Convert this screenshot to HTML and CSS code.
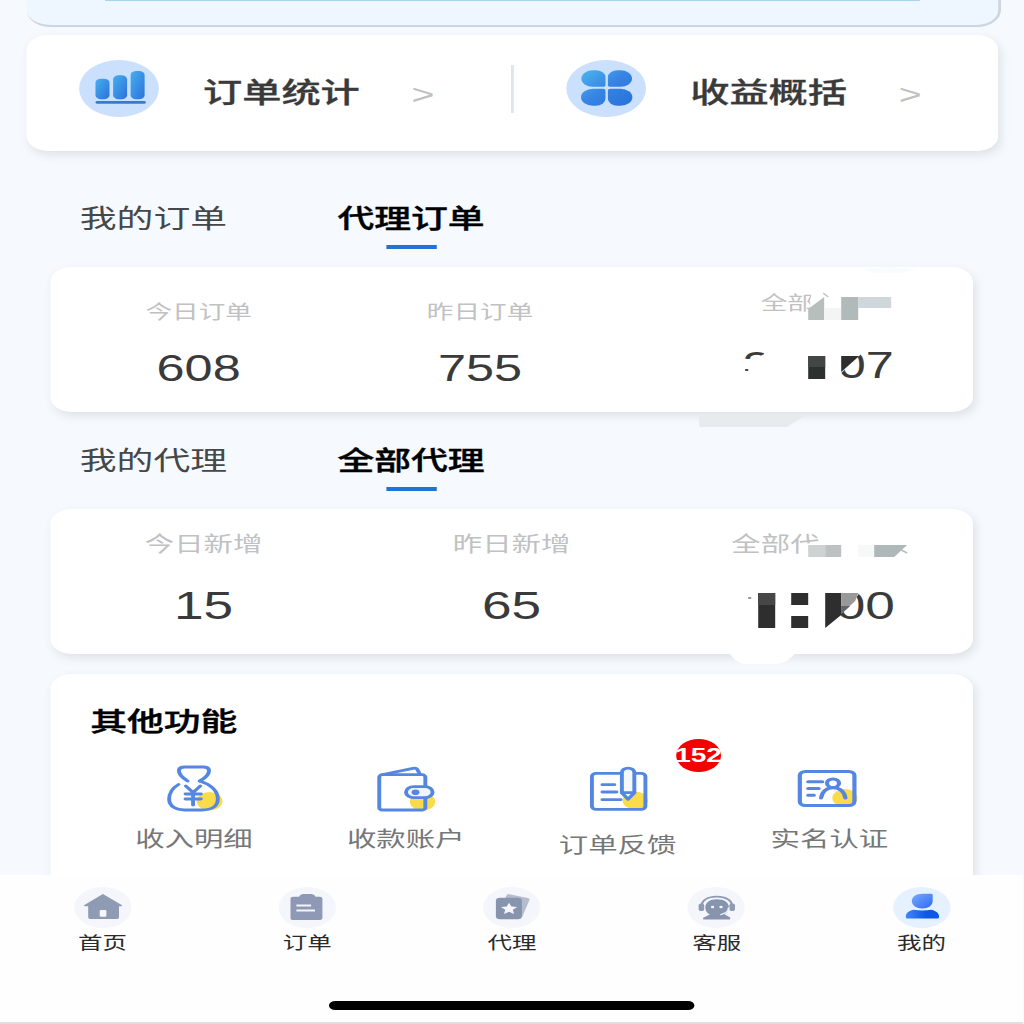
FILE: index.html
```html
<!DOCTYPE html>
<html lang="zh-CN">
<head>
  <meta charset="UTF-8">
  <meta name="viewport" content="width=device-width, initial-scale=1.0">
  <title>我的</title>

  <link rel="stylesheet" href="styles.css">
</head>
<body>
  <div class="screen">
    <div class="main">
      <div class="banner"><div class="bannerLine"></div></div>

      <!--shortcuts-->
      <div class="card links">
        <div class="link">
          <svg class="linkIcon" viewBox="0 0 58 57">
            <defs>
              <linearGradient id="blue" x1="0" y1="0" x2="1" y2="1">
                <stop offset="0" stop-color="#47aeee"/>
                <stop offset="1" stop-color="#2b72dc"/>
              </linearGradient>
              <linearGradient id="petals" gradientUnits="userSpaceOnUse" x1="12" y1="12" x2="44" y2="44">
                <stop offset="0" stop-color="#4ab2ee"/>
                <stop offset=".5" stop-color="#3784e3"/>
                <stop offset="1" stop-color="#2874dc"/>
              </linearGradient>
            </defs>
            <circle cx="29" cy="28.5" r="28.5" fill="#cbe0fc"/>
            <rect x="12.2" y="18.7" width="10" height="20.5" rx="4" fill="url(#blue)"/>
            <rect x="24.8" y="15.3" width="10" height="23.9" rx="4" fill="url(#blue)"/>
            <rect x="37.3" y="11" width="10" height="28.2" rx="4" fill="url(#blue)"/>
            <rect x="12.2" y="41" width="36" height="2.8" rx="1.4" fill="#3a79d2"/>
          </svg>
          <span class="linkText">订单统计</span>
          <span class="arrow">&gt;</span>
        </div>
        <div class="divider"></div>
        <div class="link">
          <svg class="linkIcon" viewBox="0 0 58 57">
            <circle cx="29" cy="28.500" r="28.500" fill="#cbe0fc"/>
            <g fill="url(#petals)">
              <path d="M19.500 10.300h2a7 7 0 0 1 7 7v7.500a2 2 0 0 1-2 2h-7a8.250 8.250 0 0 1 0-16.500z"/>
              <path d="M39.200 10.300h-2a7 7 0 0 0-7 7v7.500a2 2 0 0 0 2 2h7a8.250 8.250 0 0 0 0-16.500z"/>
              <path d="M19.500 45.800h2a7 7 0 0 0 7-7v-8a2 2 0 0 0-2-2h-7a8.500 8.500 0 0 0 0 17z"/>
              <path d="M39.200 45.800h-2a7 7 0 0 1-7-7v-8a2 2 0 0 1 2-2h7a8.500 8.500 0 0 1 0 17z"/>
            </g>
          </svg>
          <span class="linkText">收益概括</span>
          <span class="arrow">&gt;</span>
        </div>
      </div>

      <!--orders-->
      <div class="tabs">
        <span class="tab">我的订单</span>
        <span class="tab active">代理订单</span>
      </div>
      <div class="card stats orders">
        <div class="stat">
          <p class="label">今日订单</p>
          <p class="num">608</p>
        </div>
        <div class="stat">
          <p class="label">昨日订单</p>
          <p class="num">755</p>
        </div>
        <div class="stat total">
          <p class="label">全部</p>
          <p class="num"><span>2</span><span>07</span></p>
        </div>
        <svg class="mosaic" viewBox="690 260 240 175" preserveAspectRatio="none">
          <path d="M699 414h108l-20 13h-88z" fill="#e8ebee"/>
          <path d="M860 269q30-3 56 0l-12 4h-30z" fill="#f9fbfe"/>
          <!--label-->
          <path d="M812 289h16v8l-18 17v-14z" fill="#fff"/>
          <path d="M823 293l5 4" stroke="#bcc1c0" stroke-width="1.5"/>
          <path d="M808 309l16-12v23h-16z" fill="#b7bfbd"/>
          <path d="M824 308h17v12h-17z" fill="#f3f4f4"/>
          <path d="M841 297h17v23h-17z" fill="#afbab9"/>
          <path d="M858 297h33v11h-33z" fill="#cfd7da"/>
          <!--number-->
          <path d="M740 359h15l9-5v-7h16v37h-40z" fill="#fff"/>
          <path d="M745 369h3v2h-3z" fill="#444"/>
          <path d="M808 356h17v23h-17z" fill="#2e302f"/>
          <path d="M808 356h17v11h-17z" fill="#434645"/>
          <path d="M834 345h26v10l-20 19h-6z" fill="#fff"/>
          <path d="M841 356h18l-18 16z" fill="#2e302f"/>
        </svg>
      </div>

      <!--agents-->
      <div class="tabs">
        <span class="tab">我的代理</span>
        <span class="tab active">全部代理</span>
      </div>
      <div class="card stats agents">
        <div class="stat">
          <p class="label">今日新增</p>
          <p class="num">15</p>
        </div>
        <div class="stat">
          <p class="label">昨日新增</p>
          <p class="num">65</p>
        </div>
        <div class="stat total">
          <p class="label">全部代</p>
          <p class="num">00</p>
        </div>
        <svg class="mosaic" viewBox="690 502 240 175" preserveAspectRatio="none">
          <path d="M728 652h68q-8 11-20 12h-32q-8-1-16-12z" fill="#fff"/>
          <!--label-->
          <path d="M803 544l18-2v16h-18z" fill="#fff"/>
          <path d="M808 545h17v12h-17z" fill="#cfd2d2"/>
          <path d="M825 545h16v12h-16z" fill="#bcc2c1"/>
          <path d="M858 545h16v12h-16z" fill="#f7f8f8"/>
          <path d="M874 545h33l-13 12h-20z" fill="#afb8b8"/>
          <path d="M899 549l8 4" stroke="#b5bcbc" stroke-width="1.5"/>
          <!--number-->
          <path d="M748 597h3v2h-3z" fill="#999"/>
          <path d="M758 593h17v35h-17z" fill="#2e2e2e"/>
          <path d="M758 593h17v12h-17z" fill="#474747"/>
          <path d="M791 593h17v12h-17zM791 616h17v12h-17z" fill="#2e2e2e"/>
          <path d="M833 588h25v7l-18 19h-7z" fill="#fff"/>
          <path d="M825 593h16v22l-16 13z" fill="#2e2e2e"/>
          <path d="M841 593h17l-3 8-14 13z" fill="#999"/>
          <path d="M841 614v-8h9z" fill="#666"/>
        </svg>
      </div>

      <!--other features-->
      <div class="card features">
        <p class="featuresTitle">其他功能</p>
        <div class="featureList">
          <div class="feature">
            <svg class="featureIcon" viewBox="0 0 50 52">
              <circle cx="35.700" cy="39.300" r="9.200" fill="#fadc4b"/>
              <g class="line">
                <path d="M20 19C16 15.500 13.500 12 13.800 8c.4-2.200 2-3 4-3h13.500c2 0 3.600.8 4 3 .5 4-2 7-6.500 11"/>
                <path d="M13.500 22.500C9 26 6.800 32 6.800 37c0 7.500 5 11 11 11h12.500c6.500 0 11.300-3.500 11.300-11 0-7-4-14-13-18"/>
                <path d="M18.700 24l5.200 6.500 5.200-6.500M23.900 31v12M18.500 32h11M18.500 37h11"/>
              </g>
            </svg>
            <p class="featureText">收入明细</p>
          </div>
          <div class="feature">
            <svg class="featureIcon" viewBox="0 0 50 52">
              <circle cx="36.800" cy="39.700" r="9" fill="#fadc4b"/>
              <g class="line">
                <path d="M38.800 24.700V15a2.300 2.300 0 0 0-2.300-2.300H8.200A2.300 2.300 0 0 0 5.900 15v30.500A2.300 2.300 0 0 0 8.200 48h28.300a2.300 2.300 0 0 0 2.300-2.300V36"/>
                <path d="M8.500 12.500L30 6.300q2.500-.6 3.200 1.500l1.800 4.700"/>
                <rect x="25" y="24.700" width="19" height="11" rx="5.500" fill="#eef5ff"/>
              </g>
              <circle cx="31.800" cy="30.300" r="2.800" fill="#5587e2"/>
            </svg>
            <p class="featureText">收款账户</p>
          </div>
          <div class="feature low">
            <svg class="featureIcon" viewBox="0 0 50 52">
              <circle cx="37.700" cy="38.500" r="9" fill="#fadc4b"/>
              <g class="line">
                <path d="M28 11.300H9.800a3 3 0 0 0-3 3v30a3 3 0 0 0 3 3H42a3 3 0 0 0 3-3v-30a3 3 0 0 0-3-3h-4"/>
                <path d="M28.200 30.700V10.500a4.450 4.450 0 0 1 8.900 0v20.200l-4.500 6.600z" fill="#f4f8ff"/>
                <path d="M28.200 30.700h8.900M14.300 22.700h8.500M14.300 30h10M14.300 37.700h13"/>
              </g>
            </svg>
            <p class="featureText">订单反馈</p>
            <span class="badge">152</span>
          </div>
          <div class="feature">
            <svg class="featureIcon" viewBox="0 0 50 52">
              <circle cx="36.500" cy="36" r="9" fill="#fadc4b"/>
              <g class="line wide">
                <rect x="4.300" y="9.500" width="39" height="34" rx="4"/>
                <path d="M10.300 19.800h10M10.300 26.500h7.500M10.300 33.200h4"/>
                <circle cx="28" cy="21.200" r="4.300"/>
                <path d="M19.500 36c.5-6.500 4-10.300 8.600-10.300s8.200 3.800 8.800 10.300"/>
              </g>
            </svg>
            <p class="featureText">实名认证</p>
          </div>
        </div>
      </div>
    </div>

    <!--bottom bar-->
    <div class="nav">
      <div class="navList">
        <div class="navItem">
          <svg class="navIcon" viewBox="0 0 41 41">
            <path d="M20.500 7l13.700 11.200q.3 1-1 1H32V30q0 2-2 2H12q-2 0-2-2V19.200H8q-1.300 0-1-1z" fill="#8e9bb3"/>
            <rect x="18.200" y="23" width="4.800" height="6.700" rx="1" fill="#f5f6fb"/>
          </svg>
          <p class="navText">首页</p>
        </div>
        <div class="navItem">
          <svg class="navIcon" viewBox="0 0 41 41">
            <path d="M10.500 9.700h4q1-2.700 3-2.700h6q2 0 3 2.700h3q1.800 0 1.800 2V31q0 2-1.800 2h-19q-2 0-2-2V11.700q0-2 2-2z" fill="#8e99b5"/>
            <path d="M12.700 18.500h10.500M12.700 23.500H26" stroke="#f5f6fb" stroke-width="2"/>
          </svg>
          <p class="navText">订单</p>
        </div>
        <div class="navItem">
          <svg class="navIcon" viewBox="0 0 41 41">
            <path d="M17.500 7l14.500 4q1.500.5 1.200 2L28 30 16 10z" fill="#b5bdcc"/>
            <rect x="9.200" y="10.700" width="18.600" height="21.500" rx="3" fill="#8794ad"/>
            <path d="M18.600 15.700l1.700 3.900 4.100.4-3.100 2.800.9 4.200-3.600-2.200-3.600 2.200.9-4.200-3.100-2.800 4.100-.4z" fill="#f5f6fb"/>
          </svg>
          <p class="navText">代理</p>
        </div>
        <div class="navItem">
          <svg class="navIcon" viewBox="0 0 41 41">
            <path d="M10 19.500C10.300 13 14.800 9.700 21 9.700s10.800 3.300 11 9.800" fill="none" stroke="#8e9bb3" stroke-width="1.800"/>
            <rect x="8" y="16.500" width="4" height="7.500" rx="2" fill="#8e9bb3"/>
            <rect x="30" y="16.500" width="4" height="7.500" rx="2" fill="#8e9bb3"/>
            <path d="M21 12.300c5.500 0 8.700 3.500 8.700 8.200 0 3-1.300 5.300-3.200 6.700l4.300 3.500-.5 1.800H11.500l-.5-1.500 5-3.500c-2-1.500-3.200-3.800-3.200-7 0-4.700 3.200-8.200 8.200-8.200z" fill="#8794ad"/>
            <path d="M29.500 20.500c0 3.500-2 6-6 7.200" fill="none" stroke="#f5f6fb" stroke-width="1.200"/>
            <circle cx="18" cy="20" r="1.200" fill="#f5f6fb"/>
            <circle cx="24" cy="20" r="1.200" fill="#f5f6fb"/>
          </svg>
          <p class="navText">客服</p>
        </div>
        <div class="navItem current">
          <svg class="navIcon" viewBox="0 0 41 41">
            <defs>
              <linearGradient id="head" x1="0" y1="0" x2="1" y2="1">
                <stop offset="0" stop-color="#7aa8ff"/>
                <stop offset="1" stop-color="#2c6bf3"/>
              </linearGradient>
              <linearGradient id="body" x1="0" y1="0" x2="1" y2="0">
                <stop offset="0" stop-color="#4585fb"/>
                <stop offset=".6" stop-color="#0f57e9"/>
              </linearGradient>
            </defs>
            <path d="M21 6.700h6.200q1 0 1 1V14c0 4.500-3.200 7.500-7.400 7.500S13.300 18.500 13.300 14 16.500 6.700 21 6.700z" fill="url(#head)"/>
            <path d="M14.500 22.700c4 1 9 1 12.700 0 4 1.500 5.600 3.500 5.600 7.300q0 1.600-1.500 1.600h-21Q9 31.600 9 30c0-3.800 1.500-5.800 5.500-7.300z" fill="url(#body)"/>
          </svg>
          <p class="navText">我的</p>
        </div>
      </div>
      <div class="homeBar"></div>
    </div>
  </div>
</body>
</html>
```

FILE: styles.css
```css
* {
  box-sizing: border-box;
}

body {
  margin: 0;
  overflow: hidden;
  background-color: #f6fafe;
  font-family: "Liberation Sans", "Noto Sans CJK SC", sans-serif;
  color: #3a3a3a;
}

p {
  margin: 0;
}

svg {
  display: block;
}

/* the whole screen is drawn narrow and widened to the window */
.screen {
  width: 731.43px;
  height: 1024px;
  display: flex;
  flex-direction: column;
  overflow: hidden;
  transform: scaleX(1.4);
  transform-origin: 0 0;
}

.main {
  height: 875px;
  overflow: hidden;
}

.banner {
  height: 27px;
  margin: 0 16.5px 0 19px;
  background-color: #eef7ff;
  border-bottom: 2px solid #cdd6df;
  border-right: 2px solid #cdd6df;
  border-radius: 0 0 17px 17px;
}

.bannerLine {
  height: 1px;
  margin: 0 56px;
  background-color: #a9d3ec;
}

.card {
  background-color: #fff;
  border-radius: 15px;
  box-shadow: 2px 4px 8px rgba(60, 70, 80, 0.13);
}

.links {
  height: 116px;
  margin: 8px 18px 0 18.5px;
  display: flex;
}

.link {
  width: 346px;
  display: flex;
  padding: 25px 0 0 37px;
}

.linkIcon {
  width: 58px;
  height: 57px;
}

.linkText {
  margin-left: 31.5px;
  width: 112px;
  font-size: 28px;
  line-height: 40px;
  padding-top: 14px;
  font-weight: 500;
  -webkit-text-stroke: 0.3px #3a3a3a;
  white-space: nowrap;
}

.arrow {
  margin-left: 37px;
  padding-top: 15px;
  font-size: 28px;
  line-height: 40px;
  color: #c0c0c0;
}

.divider {
  flex: none;
  width: 2px;
  height: 48px;
  margin-top: 30px;
  background-color: #dfe5e8;
}

.tabs {
  display: flex;
  height: 97px;
  padding: 33px 0 0 57px;
}

.links + .tabs {
  height: 116px;
  padding-top: 52px;
}

.tab {
  width: 105px;
  margin-right: 79px;
  height: 47px;
  font-size: 26.3px;
  line-height: 32px;
  color: #454749;
  white-space: nowrap;
}

.active {
  color: #000;
  font-weight: 500;
  -webkit-text-stroke: 0.4px #000;
}

.active::after {
  content: "";
  display: block;
  width: 36px;
  height: 4px;
  margin: 10px auto 0;
  background-color: #1e75d6;
}

.stats {
  position: relative;
  height: 145px;
  margin: 0 36px 0 36.4px;
  display: grid;
  text-align: center;
}

.orders {
  grid-template-columns: 211px 191px 1fr;
  padding-top: 31.5px;
}

.agents {
  grid-template-columns: 218px 222px 1fr;
  padding-top: 21px;
}

.label {
  font-size: 19px;
  line-height: 28px;
  color: #bfc1c2;
}

.num {
  margin-top: 22.5px;
  font-size: 36px;
  line-height: 40px;
}

.agents .label {
  font-size: 21px;
}

.agents .num {
  margin-top: 28px;
  font-size: 38px;
}

.total {
  text-align: left;
  padding-left: 92px;
}

.orders .total {
  margin-top: -9px;
}

.orders .total .label {
  padding-left: 13px;
}

.orders .total .num {
  display: flex;
  gap: 48px;
  margin-top: 28px;
}

.agents .total {
  padding-left: 46px;
}

.agents .total .num {
  padding-left: 74.5px;
}

/* censored part of the totals */
.mosaic {
  position: absolute;
  top: -7px;
  left: 456.5px;
  width: 171.43px;
  height: 175px;
}

.features {
  height: 230px;
  margin: 20px 36px 0 36.4px;
  padding-top: 32px;
}

.featuresTitle {
  padding-left: 28px;
  font-size: 26.3px;
  line-height: 32px;
  color: #000;
  font-weight: 500;
  -webkit-text-stroke: 0.4px #000;
}

.featureList {
  display: flex;
  padding: 24px 0 0 26.5px;
}

.feature {
  position: relative;
  width: 151.3px;
  display: flex;
  flex-direction: column;
  align-items: center;
}

.featureIcon {
  width: 50px;
  height: 52px;
}

.line {
  fill: none;
  stroke: #5587e2;
  stroke-width: 2.8;
  stroke-linecap: round;
  stroke-linejoin: round;
}

.wide {
  stroke-width: 3;
}

.featureText {
  margin-top: 10px;
  font-size: 21px;
  line-height: 30px;
  color: #767778;
}

.low .featureText {
  margin-top: 16px;
}

.badge {
  position: absolute;
  top: -23px;
  left: 117.5px;
  width: 32px;
  height: 33px;
  border-radius: 50%;
  background-color: #f40000;
  color: #fff;
  font-size: 20px;
  font-weight: bold;
  line-height: 33px;
  display: flex;
  justify-content: center;
}

.nav {
  height: 149px;
  background-color: #fefefe;
  border-bottom: 2px solid #dfdfdf;
}

.navList {
  display: flex;
  padding-top: 12px;
}

.navItem {
  flex: 1;
  display: flex;
  flex-direction: column;
  align-items: center;
}

.navIcon {
  width: 41px;
  height: 41px;
  border-radius: 50%;
  background-color: #f5f6fb;
}

.current .navIcon {
  background-color: #e5f1ff;
}

.navText {
  margin-top: 3px;
  font-size: 17.5px;
  line-height: 24px;
  color: #2a2a2a;
}

.homeBar {
  width: 261.5px;
  height: 9px;
  margin: 46px auto 0;
  border-radius: 5px;
  background-color: #000;
}
```
